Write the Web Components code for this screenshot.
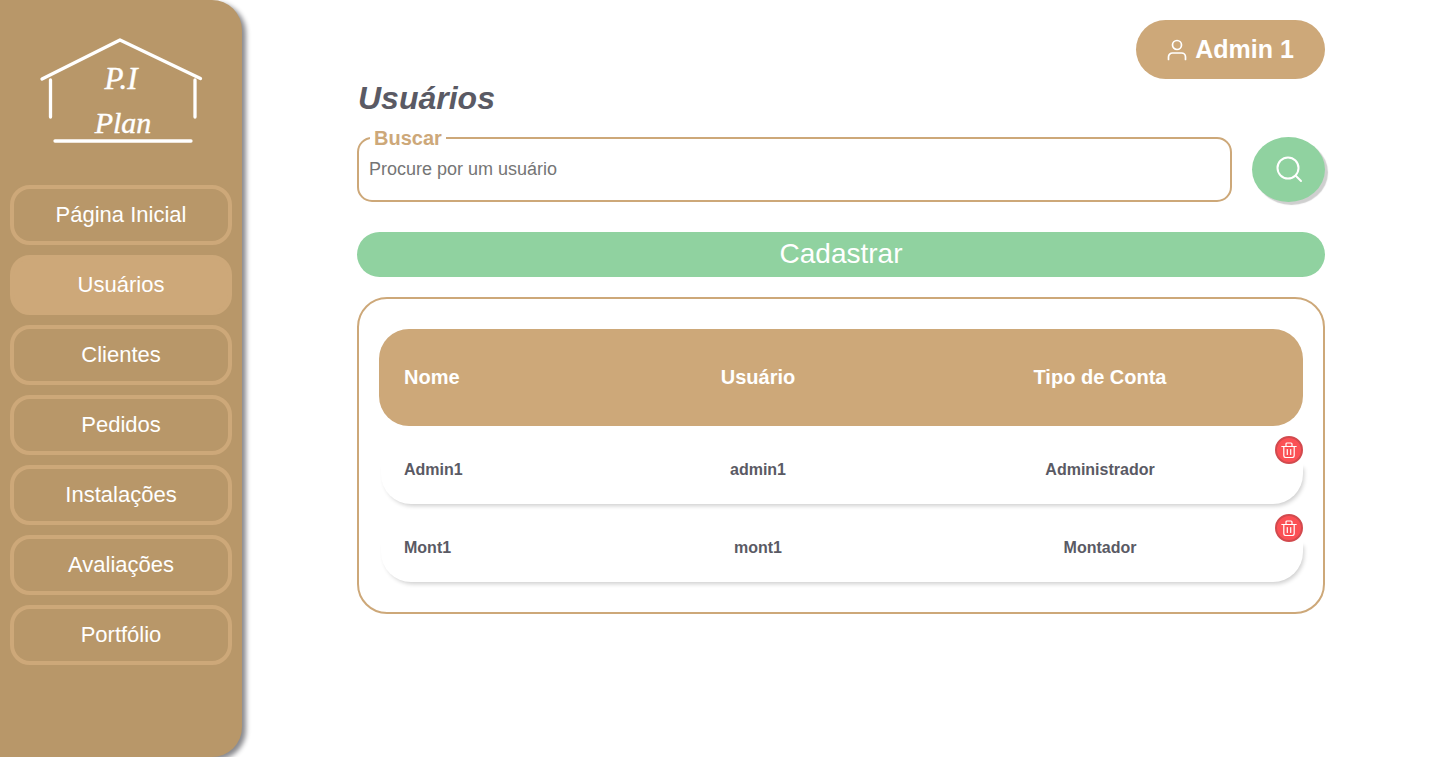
<!DOCTYPE html>
<html lang="pt-BR">
<head>
<meta charset="utf-8">
<title>Usuários</title>
<style>
  html, body { margin: 0; height: 100%; }
  body { font-family: "Liberation Sans", Arial, sans-serif; background: #fff; overflow: hidden; }
</style>
</head>
<body>
<app-page>
  <side-bar slot="side">
    <nav-item>Página Inicial</nav-item>
    <nav-item active>Usuários</nav-item>
    <nav-item>Clientes</nav-item>
    <nav-item>Pedidos</nav-item>
    <nav-item>Instalações</nav-item>
    <nav-item>Avaliações</nav-item>
    <nav-item>Portfólio</nav-item>
  </side-bar>
  <user-pill>Admin 1</user-pill>
  <page-title>Usuários</page-title>
  <search-bar></search-bar>
  <add-button>Cadastrar</add-button>
  <users-table>
    <user-row nome="Admin1" usuario="admin1" tipo="Administrador"></user-row>
    <user-row nome="Mont1" usuario="mont1" tipo="Montador"></user-row>
  </users-table>
</app-page>

<script>
class AppPage extends HTMLElement {
  constructor() {
    super();
    this.attachShadow({ mode: "open" });
    this.shadowRoot.innerHTML = `
    <style>
      :host { display: flex; height: 757px; }
      main { flex: 1; display: flex; justify-content: center; }
      .content { width: 968px; padding-top: 20px; display: flex; flex-direction: column; }
    </style>
    <slot name="side"></slot>
    <main><div class="content"><slot></slot></div></main>
    `;
  }
}

class SideBar extends HTMLElement {
  constructor() {
    super();
    this.attachShadow({ mode: "open" });
    this.shadowRoot.innerHTML = `
    <style>
      :host {
        display: flex; flex-direction: column; flex: none; box-sizing: border-box;
        width: 242px; height: 757px; padding: 36px 10px 0;
        background: #b89769; border-radius: 0 30px 30px 0;
        box-shadow: 4px 3px 5px #8a8a8e;
      }
      svg { display: block; margin: 0 auto 39px; }
      text { font-family: "Liberation Serif", serif; font-style: italic; fill: #fff; stroke: #fff; stroke-width: .4px; }
      .pi { font-size: 31px; }
      .plan { font-size: 30px; }
      .list { display: flex; flex-direction: column; gap: 10px; }
    </style>
    <svg width="170" height="110" viewBox="35 36 170 110" fill="none" stroke="#fff" stroke-width="3.300" stroke-linecap="round" stroke-linejoin="round">
      <path d="M41 79 119 40 199.500 78.500"/>
      <path d="M49.500 80V117"/>
      <path d="M194 80V117"/>
      <path d="M54 141H190"/>
      <text class="pi" x="120" y="89" text-anchor="middle">P.I</text>
      <text class="plan" x="122" y="133" text-anchor="middle">Plan</text>
    </svg>
    <div class="list"><slot></slot></div>
    `;
  }
}

class NavItem extends HTMLElement {
  constructor() {
    super();
    this.attachShadow({ mode: "open" });
    this.shadowRoot.innerHTML = `
    <style>
      :host {
        display: flex; align-items: center; justify-content: center; box-sizing: border-box;
        height: 60px; border: 4px solid #cda879; border-radius: 20px;
        color: #fff; font-size: 22px;
      }
      :host([active]) { background: #cda879; }
    </style>
    <slot></slot>
    `;
  }
}

class UserPill extends HTMLElement {
  constructor() {
    super();
    this.attachShadow({ mode: "open" });
    this.shadowRoot.innerHTML = `
    <style>
      :host {
        display: flex; align-items: center; justify-content: center; gap: 8px; align-self: flex-end;
        box-sizing: border-box; width: 189px; height: 59px; border-radius: 30px;
        background: #cda879; color: #fff; font-size: 25px; font-weight: bold;
      }
    </style>
    <svg width="20" height="22" viewBox="0 0 20 22" fill="none" stroke="#fff" stroke-width="1.700" stroke-linecap="round">
      <circle cx="10" cy="6" r="4.500"/>
      <path d="M1.500 20.500V18a4 4 0 0 1 4-4h9a4 4 0 0 1 4 4v2.500"/>
    </svg>
    <slot></slot>
    `;
  }
}

class PageTitle extends HTMLElement {
  constructor() {
    super();
    this.attachShadow({ mode: "open" });
    this.shadowRoot.innerHTML = `
    <style>
      :host {
        display: block; margin: 1px 0 0 1px; height: 37px; line-height: 37px;
        color: #5a5a64; font-size: 32px; font-weight: bold; font-style: italic;
      }
    </style>
    <slot></slot>
    `;
  }
}

class SearchBar extends HTMLElement {
  constructor() {
    super();
    this.attachShadow({ mode: "open" });
    this.shadowRoot.innerHTML = `
    <style>
      :host { display: flex; gap: 20px; align-items: flex-end; height: 75px; margin-top: 10px; }
      fieldset {
        flex: 1; box-sizing: border-box; height: 75px; margin: 0; padding: 0 10px;
        border: 2px solid #cda879; border-radius: 15px;
      }
      legend {
        margin-left: 1px; padding: 0 4px; height: 21px; line-height: 23px;
        color: #cda879; font-size: 20px; font-weight: bold;
      }
      input {
        display: block; width: 100%; height: 42px; padding: 0; border: 0; outline: 0;
        background: none; font: 18px "Liberation Sans", Arial, sans-serif;
      }
      button {
        flex: none; width: 73px; height: 65px; padding: 0 0 2px; border: 0; border-radius: 50%;
        display: flex; align-items: center; justify-content: center;
        background: #90d2a0; box-shadow: 3px 3px 1px #cfcfcf;
      }
    </style>
    <fieldset>
      <legend>Buscar</legend>
      <input type="text" placeholder="Procure por um usuário">
    </fieldset>
    <button type="button" aria-label="Buscar">
      <svg width="28" height="28" viewBox="0 0 28 28" fill="none" stroke="#fff" stroke-width="2" stroke-linecap="round">
        <circle cx="13" cy="13" r="10.500"/>
        <path d="M21 21 26 26"/>
      </svg>
    </button>
    `;
  }
}

class AddButton extends HTMLElement {
  constructor() {
    super();
    this.attachShadow({ mode: "open" });
    this.shadowRoot.innerHTML = `
    <style>
      :host {
        display: flex; align-items: center; justify-content: center; box-sizing: border-box;
        height: 45px; margin-top: 30px; padding-bottom: 2px; border-radius: 23px;
        background: #90d2a0; color: #fff; font-size: 28px;
      }
    </style>
    <slot></slot>
    `;
  }
}

class UsersTable extends HTMLElement {
  constructor() {
    super();
    this.attachShadow({ mode: "open" });
    this.shadowRoot.innerHTML = `
    <style>
      :host {
        display: block; box-sizing: border-box; height: 317px; margin-top: 20px;
        padding: 30px 20px; border: 2px solid #cda879; border-radius: 30px;
      }
      .head, ::slotted(user-row) {
        display: grid; grid-template-columns: 190px 328px 356px; padding-left: 25px; align-items: center;
      }
      .head {
        height: 97px; border-radius: 30px; background: #cda879;
        color: #fff; font-size: 20px; font-weight: bold;
      }
      .head span + span { text-align: center; }
    </style>
    <div class="head"><span>Nome</span><span>Usuário</span><span>Tipo de Conta</span></div>
    <slot></slot>
    `;
  }
}

class UserRow extends HTMLElement {
  constructor() {
    super();
    this.attachShadow({ mode: "open" });
    this.shadowRoot.innerHTML = `
    <style>
      :host {
        position: relative; box-sizing: border-box; height: 78px; padding-top: 10px;
        color: #5a5a64; font-size: 16px; font-weight: bold;
      }
      :host::before {
        content: ""; position: absolute; top: 38px; right: 0; bottom: 0; left: 2px;
        border-radius: 0 0 30px 30px; box-shadow: 2px 3px 4px -1px #cfcfcf;
      }
      span + span { text-align: center; }
      button {
        position: absolute; top: 10px; right: 0; box-sizing: border-box;
        width: 28px; height: 28px; padding: 0; border: 2px solid #d24a4e; border-radius: 50%;
        display: flex; align-items: center; justify-content: center; background: #fb5055;
      }
    </style>
    <span class="nome"></span><span class="usuario"></span><span class="tipo"></span>
    <button type="button" aria-label="Excluir">
      <svg width="16" height="16" viewBox="0 0 16 16" fill="none" stroke="#fff" stroke-width="1.200" stroke-linecap="round" stroke-linejoin="round">
        <path d="M.8 4.500H15.200"/>
        <path d="M5 4.500V2a1 1 0 0 1 1-1h4a1 1 0 0 1 1 1v2.500"/>
        <path d="M2.800 4.500V13.500a2 2 0 0 0 2 2h6.400a2 2 0 0 0 2-2V4.500"/>
        <path d="M6.300 7.500V12.500"/>
        <path d="M9.700 7.500V12.500"/>
      </svg>
    </button>
    `;
  }

  connectedCallback() {
    const root = this.shadowRoot;
    root.querySelector(".nome").textContent = this.getAttribute("nome");
    root.querySelector(".usuario").textContent = this.getAttribute("usuario");
    root.querySelector(".tipo").textContent = this.getAttribute("tipo");
  }
}

window.customElements.define("app-page", AppPage);
window.customElements.define("side-bar", SideBar);
window.customElements.define("nav-item", NavItem);
window.customElements.define("user-pill", UserPill);
window.customElements.define("page-title", PageTitle);
window.customElements.define("search-bar", SearchBar);
window.customElements.define("add-button", AddButton);
window.customElements.define("users-table", UsersTable);
window.customElements.define("user-row", UserRow);
</script>
</body>
</html>
